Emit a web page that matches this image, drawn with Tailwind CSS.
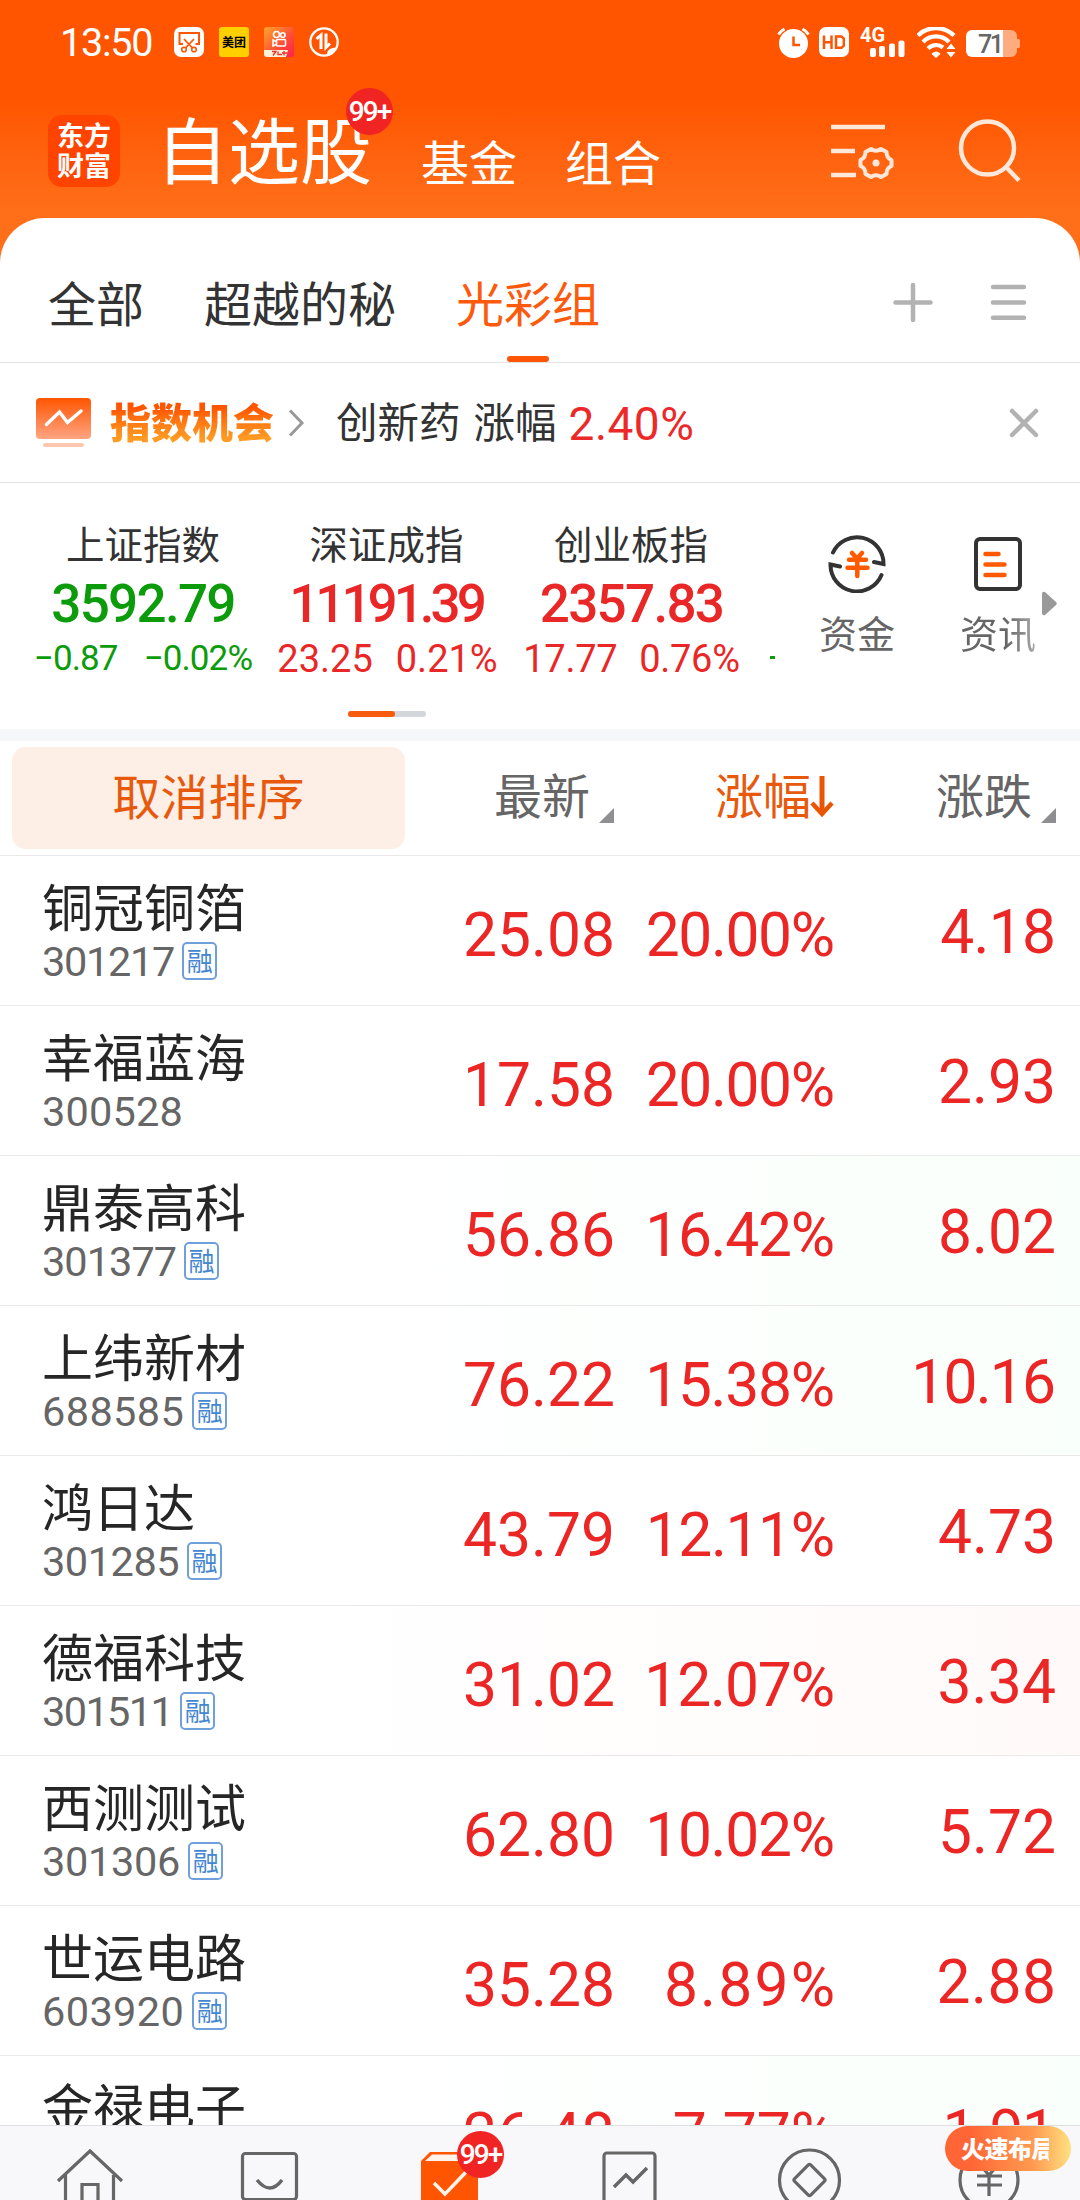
<!DOCTYPE html>
<html lang="zh-CN">
<head>
  <meta charset="UTF-8">
  <script src="https://cdn.jsdelivr.net/npm/@tailwindcss/browser@4"></script>
  <title>自选股</title>
  <meta name="viewport" content="width=device-width, initial-scale=1">
</head>
<body class="w-[1080px] h-[2200px] overflow-hidden bg-[#ff6e18] font-['Noto_Sans_CJK_SC',sans-serif] text-[#333]">
<div class="w-full h-full flex flex-col">

  <!-- Header -->
  <header class="h-[263px] -mb-[45px] shrink-0 bg-linear-to-b from-[#ff5500] from-38% to-[#ff6e18] to-80% text-white">
    <!-- Status bar -->
    <div class="h-[84px] flex items-center pl-[60px] pr-[60px]">
      <span class="w-[114px] pt-[2px] font-[Roboto] text-[39.500px] leading-none tracking-[-1.200px]">13:50</span>
      <div class="flex gap-[15px]">
        <svg class="w-[30px] h-[30px]" viewBox="0 0 30 30" fill="none">
          <rect width="30" height="30" rx="7" fill="#fff"/>
          <path d="M9 17H5.500V6h19.500v11H21.500" stroke="#ff5500" stroke-width="2"/>
          <path d="M10 12l8.500 9M20 12l-8.500 9" stroke="#ff5500" stroke-width="1.800"/>
          <circle cx="10" cy="22.500" r="2.300" stroke="#ff5500" stroke-width="1.600"/><circle cx="20" cy="22.500" r="2.300" stroke="#ff5500" stroke-width="1.600"/>
        </svg>
        <span class="w-[30px] h-[30px] rounded-[3px] bg-[#ffd000] text-black text-[12px] font-bold leading-[30px] text-center whitespace-nowrap">美团</span>
        <svg class="w-[30px] h-[30px]" viewBox="0 0 30 30" fill="none" stroke="#fff" stroke-width="1.600">
          <defs><linearGradient id="ks" x1="0" y1="0" x2="1" y2="1"><stop offset="0" stop-color="#ffa62a"/><stop offset=".6" stop-color="#ff4a35"/><stop offset="1" stop-color="#ff1f4f"/></linearGradient></defs>
          <rect width="30" height="30" rx="3" fill="url(#ks)" stroke="none"/>
          <circle cx="12.500" cy="7.500" r="3"/><circle cx="18.800" cy="8" r="2.300"/>
          <rect x="12.500" y="12.500" width="9" height="6.500" rx="1"/><path d="M12 14.500l-3-1.500v6l3-1.500"/>
          <path d="M0 23h24l-2 7H3a3 3 0 0 1-3-3z" fill="#fff0d8" stroke="none"/>
          <path d="M8 24.500h4l-3 4M14 24.500v3h4M20 24v4.500M18 26h5" stroke="#e8342c" stroke-width="1.300"/>
        </svg>
        <svg class="w-[30px] h-[30px]" viewBox="0 0 30 30" fill="none" stroke="#fff">
          <circle cx="15" cy="15" r="13.700" stroke-width="2.300"/>
          <path d="M7.500 12l4.500-4v14M17 6.500v14l4-4" stroke-width="3"/>
          <path d="M18 27.500c0-5 4-6.500 9.500-7-1.500 3.500-4.500 6.500-9.500 7z" fill="#fff" stroke="none"/>
        </svg>
      </div>
      <div class="ml-auto flex items-center">
        <svg class="w-[33px] h-[31px]" viewBox="0 0 33 31" fill="none" stroke="#fff" stroke-width="3">
          <circle cx="16.500" cy="16.500" r="14.500" fill="#fff" stroke="none"/>
          <path d="M1.500 7.500a14 14 0 0 1 6-5.500M31.500 7.500a14 14 0 0 0-6-5.500"/>
          <path d="M16.500 9.500v8.500h6.500" stroke="#ff5500" stroke-width="2.500"/>
        </svg>
        <svg class="w-[30px] h-[30px] ml-[9px]" viewBox="0 0 30 30" fill="none">
          <rect width="30" height="30" rx="7" fill="#fff"/>
          <path d="M5 8.500v13.500M12.500 8.500v13.500M5 15.200h7.500M17 9.600h5.500l2.300 2v7l-2.300 2.200H17z" stroke="#ff5500" stroke-width="2.500"/>
        </svg>
        <svg class="w-[46px] h-[32px] ml-[11px]" viewBox="0 0 46 32" fill="#fff">
          <text x="0" y="15.500" font-family="Roboto" font-weight="700" font-size="20" textLength="25" lengthAdjust="spacingAndGlyphs">4G</text>
          <rect x="10" y="22" width="6" height="9" rx="2"/><rect x="19" y="20" width="6" height="11" rx="2"/><rect x="29" y="17.500" width="6" height="13.500" rx="2"/><rect x="38.500" y="14.500" width="6" height="16.500" rx="2"/>
        </svg>
        <svg class="w-[40px] h-[31px] ml-[11px]" viewBox="0 0 40 31" fill="none" stroke="#fff" stroke-width="4.200">
          <path d="M1 8.500a25.500 25.500 0 0 1 36 0M6 15a18 18 0 0 1 26 0M11 21.500a11 11 0 0 1 15-1"/>
          <path d="M14.500 27c2.500-3.500 7-3.500 9 0l-4.500 4zM29.500 22l4.500-5.500 4.500 5.500zM29.500 25l4.500 5.500 4.500-5.500z" fill="#fff" stroke="none"/>
        </svg>
        <svg class="w-[54px] h-[27px] ml-[9px] mt-[3px]" viewBox="0 0 54 27">
          <path d="M36 0h9a6 6 0 0 1 6 6v3h1.500a1.500 1.500 0 0 1 1.500 1.500v6a1.500 1.500 0 0 1-1.500 1.500H51v3a6 6 0 0 1-6 6h-9z" fill="#ffab80"/>
          <path d="M6 0h31v27H6a6 6 0 0 1-6-6V6a6 6 0 0 1 6-6z" fill="#fff"/>
          <text x="12" y="22.500" font-family="Roboto" font-weight="500" font-size="25" textLength="26" fill="#666">71</text>
        </svg>
      </div>
    </div>

    <!-- Top navigation -->
    <div class="h-[134px] relative flex pl-[48px] pr-[59px]">
      <div class="w-[72px] h-[72px] mt-[31px] rounded-[14px] bg-[#ff4400] flex flex-col items-center justify-center pb-[2px] text-[27px] leading-[30px] font-bold">
        <span>东方</span><span>财富</span>
      </div>
      <h1 class="ml-[36px] mt-[15px] text-[72px] leading-[96px]">自选股</h1>
      <span class="ml-[49px] mt-[41px] text-[48px] leading-[70px]">基金</span>
      <span class="ml-[48px] mt-[41px] text-[48px] leading-[70px]">组合</span>
      <svg class="w-[64px] h-[60px] ml-auto mt-[39px]" viewBox="0 0 64 60" fill="none" stroke="#ffe8d9" stroke-width="4.500">
        <path d="M1 4h54M1 28h24M1 52h25"/>
        <path d="M41 25.500q5 3.500 10 0l5.500 3q0 6 5 8v6q-5 2-5 8l-5.500 3q-5-3.500-10 0l-5.500-3q0-6-5-8v-6q5-2 5-8z" transform="translate(0 .5)" stroke-linejoin="round" stroke-width="4"/>
        <circle cx="46" cy="40" r="3.500" fill="#ffe8d9" stroke="none"/>
      </svg>
      <svg class="w-[63px] h-[66px] ml-[64px] mt-[34px]" viewBox="0 0 63 66" fill="none" stroke="#ffe8d9" stroke-width="4.500">
        <circle cx="29.500" cy="30" r="26.500"/><path d="M48 49l13 13.500"/>
      </svg>
      <span class="absolute left-[346px] top-[4px] w-[47px] h-[47px] rounded-full bg-[#f12424] text-center leading-[47px] font-[Roboto] font-medium text-[28px] tracking-[-2px]">99+</span>
    </div>
  </header>

  <main class="flex-1 min-h-0 rounded-t-[45px] bg-white flex flex-col overflow-hidden">
    <!-- Group tabs -->
    <nav class="h-[145px] shrink-0 border-b border-[#e3e3e3] flex pl-[48px] pr-[52px] text-[48px] leading-[70px]">
      <span class="mt-[48px]">全部</span>
      <span class="mt-[48px] ml-[60px]">超越的秘</span>
      <div class="ml-[60px] flex flex-col items-center justify-between text-[#fc5a0c]">
        <span class="mt-[48px]">光彩组</span>
        <i class="w-[42px] h-[6px] rounded-[3px] bg-[#fc5505]"></i>
      </div>
      <svg class="w-[40px] h-[40px] ml-auto mt-[64px]" viewBox="0 0 40 40" stroke="#b2b2b2" stroke-width="4.500" stroke-linecap="round"><path d="M20 3v35M2.500 20.500h35"/></svg>
      <svg class="w-[38px] h-[40px] ml-[57px] mt-[64px]" viewBox="0 0 38 40" stroke="#b2b2b2" stroke-width="4.500" stroke-linecap="round"><path d="M3 5h31M3 20.500h31M3 35.800h31"/></svg>
    </nav>

    <!-- Index opportunity strip -->
    <div class="h-[120px] shrink-0 border-b border-[#e3e3e3] flex items-center pl-[36px] pr-[39px]">
      <svg class="w-[55px] h-[50px]" viewBox="0 0 55 50" fill="none">
        <defs><linearGradient id="op" x1="0" y1="0" x2="0" y2="1"><stop offset="0" stop-color="#ff5500"/><stop offset="1" stop-color="#ffa583"/></linearGradient></defs>
        <rect width="55" height="41" rx="4" fill="url(#op)"/>
        <path d="M10.500 26.500L23.500 14l8 10.500L45 13" stroke="#fff" stroke-width="3.500" stroke-linecap="round"/>
        <rect x="7" y="45" width="41" height="4" rx="2" fill="#ffc7b0"/>
      </svg>
      <span class="ml-[19px] text-[41px] leading-[60px] -mt-[5px] font-black bg-linear-to-b from-[#ff5500] from-30% to-[#ff9a22] to-80% bg-clip-text text-transparent">指数机会</span>
      <svg class="w-[18px] h-[28px] ml-[14px]" viewBox="0 0 18 28" fill="none" stroke="#999" stroke-width="3"><path d="M2 1.500l12 12.500L2 26.500"/></svg>
      <span class="ml-[30px] text-[41.500px] leading-[60px] -mt-[5px]">创新药</span>
      <span class="ml-[13px] text-[41.500px] leading-[60px] -mt-[5px]">涨幅</span>
      <span class="ml-[12px] mt-[2px] font-[Roboto] text-[46px] leading-none tracking-[0.500px] text-[#ec2828]">2.40%</span>
      <svg class="w-[34px] h-[34px] ml-auto" viewBox="0 0 34 34" stroke="#b2b2b2" stroke-width="4.500" stroke-linecap="round"><path d="M5 5l24 24M29 5L5 29"/></svg>
    </div>

    <!-- Market indices -->
    <section class="h-[246px] shrink-0 relative flex">
      <div class="w-[776px] h-full flex overflow-hidden">
        <div class="w-[286px] shrink-0 flex flex-col items-center text-[#0b9b0b]">
          <span class="mt-[31px] text-[38.500px] leading-[56px] text-[#333]">上证指数</span>
          <b class="mt-[6px] font-[Roboto] font-medium text-[53px] leading-[56px] tracking-[-1.700px]">3592.79</b>
          <div class="mt-[7px] flex gap-[26px] font-[Roboto] text-[35px] leading-[40px] tracking-[-0.900px]"><span>−0.87</span><span>−0.02%</span></div>
        </div>
        <div class="w-[204px] shrink-0 flex flex-col items-center text-[#e92727]">
          <span class="mt-[31px] text-[38.500px] leading-[56px] text-[#333] -ml-[3px]">深证成指</span>
          <b class="mt-[6px] -ml-[4px] font-[Roboto] font-medium text-[53px] leading-[56px] tracking-[-4px]">11191.39</b>
          <div class="mt-[7px] -ml-[1px] flex gap-[23px] font-[Roboto] text-[38px] leading-[40px] whitespace-nowrap"><span>23.25</span><span>0.21%</span></div>
        </div>
        <div class="w-[280px] shrink-0 flex flex-col items-center text-[#e92727]">
          <span class="mt-[31px] ml-[2px] text-[38.500px] leading-[56px] text-[#333]">创业板指</span>
          <b class="mt-[6px] ml-[3px] font-[Roboto] font-medium text-[53px] leading-[56px] tracking-[-1.700px]">2357.83</b>
          <div class="mt-[7px] ml-[3px] flex gap-[22px] font-[Roboto] text-[38px] leading-[40px] tracking-[-0.300px]"><span>17.77</span><span>0.76%</span></div>
        </div>
        <i class="w-[5px] h-[3px] mt-[173px] bg-[#0b9b0b]"></i>
      </div>
      <div class="ml-[41px] w-[80px] flex flex-col items-center text-[38px] leading-[56px] text-[#666]">
        <svg class="w-[60px] h-[60px] mt-[50px]" viewBox="0 0 60 60" fill="none" stroke="#333" stroke-width="4" stroke-linecap="round">
          <path d="M6 19.500A26.500 26.500 0 0 1 56.500 31l-9.500-2M54.500 42A26.500 26.500 0 0 1 3.500 31.500l9.500 2" />
          <path d="M25 20l5 5.500 5-5.500M22 26.800h17M20.500 34.800h20M30.300 27v16" stroke="#ff5a00" stroke-width="4.500"/>
        </svg>
        <span class="mt-[11px]">资金</span>
      </div>
      <div class="ml-[61px] w-[80px] flex flex-col items-center text-[38px] leading-[56px]">
        <svg class="w-[48px] h-[54px] mt-[54px]" viewBox="0 0 48 54" fill="none" stroke="#333" stroke-width="4">
          <rect x="2" y="2" width="44" height="50" rx="4"/>
          <path d="M11.500 17h13M11.500 27.500h19M11.500 38h19" stroke="#ff5a00" stroke-width="4.500" stroke-linecap="round"/>
        </svg>
        <span class="mt-[13px] bg-linear-to-r from-[#666] from-60% to-[#aaa] bg-clip-text text-transparent">资讯</span>
      </div>
      <svg class="w-[15px] h-[25px] ml-[4px] mt-[108px]" viewBox="0 0 15 25"><path d="M0 3q0-3 3-2l11 10q1.500 1.500 0 3L3 24q-3 1-3-2z" fill="#999"/></svg>
      <div class="absolute left-[348px] top-[228px] w-[78px] h-[6px] rounded-full bg-[#d3d7db]"><i class="block w-[47px] h-[6px] rounded-full bg-[#f95b0e]"></i></div>
    </section>
    <div class="h-[12px] shrink-0 bg-[#f6f7fa]"></div>

    <!-- Column headings -->
    <div class="h-[115px] shrink-0 border-b border-[#e9e9e9] flex pl-[12px] text-[48px] leading-[70px] text-[#666]">
      <button class="w-[393px] h-[102px] mt-[6px] rounded-[14px] bg-[#fdeee6] pb-[8px] text-[#e75a0e]">取消排序</button>
      <div class="w-[209px] flex justify-end"><span class="mt-[17px]">最新</span><svg class="w-[15px] h-[15px] ml-[9px] mt-[67px]" viewBox="0 0 15 15"><path d="M15 0v15H0z" fill="#8e8e93"/></svg></div>
      <div class="w-[220px] flex justify-end text-[#e75a0e]"><span class="mt-[17px]">涨幅</span><svg class="w-[24px] h-[44px] -ml-[1px] mt-[34px]" viewBox="0 0 24 44" fill="none" stroke="#ea5504"><path d="M12 1v36" stroke-width="5"/><path d="M2 28l10 11 10-11" stroke-width="4.500"/></svg></div>
      <div class="w-[222px] flex justify-end"><span class="mt-[17px]">涨跌</span><svg class="w-[15px] h-[15px] ml-[9px] mt-[67px]" viewBox="0 0 15 15"><path d="M15 0v15H0z" fill="#8e8e93"/></svg></div>
    </div>

    <!-- Stock rows -->
    <div id="stocks" class="flex-1 min-h-0 overflow-hidden"></div>
  </main>

  <!-- Tab bar -->
  <footer class="h-[75px] shrink-0 relative border-t border-[#dedfe0] bg-[#f8f8fa] grid grid-cols-6">
    <svg class="w-[180px] h-[74px]" viewBox="0 0 180 74" fill="none" stroke="#666" stroke-width="3.200"><path d="M58 55l32-30 32 30M65.500 49v30M113.500 49v30M82 79V58.500h16V79"/></svg>
    <svg class="w-[180px] h-[74px]" viewBox="0 0 180 74" fill="none" stroke="#666" stroke-width="3.200"><rect x="62.500" y="27.500" width="54" height="46" rx="3"/><path d="M77 54q13 16 25 0" stroke-width="3.500"/></svg>
    <svg class="w-[180px] h-[74px]" viewBox="0 0 180 74" fill="none"><path d="M61 35l9-9h40l8 9v45H61z" fill="#ff5500"/><path d="M65 35l7-6.500h40V35z" fill="#fff3ec"/><path d="M74 57l11 11 22-23" stroke="#fff3ec" stroke-width="3.500"/></svg>
    <svg class="w-[180px] h-[74px]" viewBox="0 0 180 74" fill="none" stroke="#666" stroke-width="3.200"><rect x="64" y="27" width="51" height="60" rx="3"/><path d="M74 61l12-12 7 7 14-14" stroke-width="3.500"/></svg>
    <svg class="w-[180px] h-[74px]" viewBox="0 0 180 74" fill="none" stroke="#666" stroke-width="3.200"><circle cx="89.500" cy="54" r="30"/><rect x="78" y="42.500" width="23" height="23" rx="2" transform="rotate(45 89.500 54)"/></svg>
    <svg class="w-[180px] h-[74px]" viewBox="0 0 180 74" fill="none" stroke="#666" stroke-width="3.200"><circle cx="89" cy="54" r="29"/><path d="M81 40l8 9 8-9M77 50h25M77 59h25M89 49v21"/></svg>
    <span class="absolute left-[457px] top-[5px] w-[47px] h-[47px] rounded-full bg-[#f12424] text-white text-center leading-[47px] font-[Roboto] font-medium text-[28px] tracking-[-2px]">99+</span>
    <span class="absolute left-[945px] top-0 w-[126px] h-[45px] rounded-full bg-linear-to-r from-[#ff6535] from-20% via-[#ff9a50] via-70% to-[#ffe080] pl-[16px] text-white text-[24px] leading-[44px] font-black tracking-[-0.500px] whitespace-nowrap"><span class="block w-[88px] overflow-hidden">火速布局</span></span>
  </footer>
</div>

  <script>
    // x: where the row's code text ends, pt / ct: tracking of percentage and change
    const stocks = [
      { name: '铜冠铜箔', code: '301217', x: 174, tag: true, price: '25.08', pct: '20.00%', pt: -1.4, ct: -0.7, chg: '4.18' },
      { name: '幸福蓝海', code: '300528', x: 183, tag: false, price: '17.58', pct: '20.00%', pt: -1.4, ct: 0, chg: '2.93' },
      { name: '鼎泰高科', code: '301377', x: 176, tag: true, price: '56.86', pct: '16.42%', pt: -1.3, ct: 0, chg: '8.02', bg: 'bg-linear-to-r from-white from-30% to-[#f9fffb]' },
      { name: '上纬新材', code: '688585', x: 184, tag: true, price: '76.22', pct: '15.38%', pt: -1.3, ct: -1.8, chg: '10.16', bg: 'bg-linear-to-r from-white from-30% to-[#f9fffb]' },
      { name: '鸿日达', code: '301285', x: 179, tag: true, price: '43.79', pct: '12.11%', pt: -1.4, ct: 0, chg: '4.73' },
      { name: '德福科技', code: '301511', x: 172, tag: true, price: '31.02', pct: '12.07%', pt: -1.1, ct: 0.2, chg: '3.34', bg: 'bg-linear-to-r from-white from-30% to-[#fffaf9]' },
      { name: '西测测试', code: '301306', x: 180, tag: true, price: '62.80', pct: '10.02%', pt: -1.3, ct: 0, chg: '5.72' },
      { name: '世运电路', code: '603920', x: 184, tag: true, price: '35.28', pct: '8.89%', pt: 2.2, ct: 0.5, chg: '2.88' },
      { name: '金禄电子', code: '301282', x: 179, tag: true, price: '26.48', pct: '7.77%', pt: 0, ct: -1.5, chg: '1.91', bg: 'bg-linear-to-r from-white from-30% to-[#f9fffb]' },
    ];

    document.getElementById('stocks').innerHTML = stocks.map(s => `
      <div class="h-[150px] border-b border-[#e9e9e9] flex ${s.bg || ''}">
        <div class="w-[374px] pl-[42px]">
          <div class="mt-[14px] h-[71px] text-[51px] leading-[70px] text-[#262626]">${s.name}</div>
          <div class="flex items-center h-[42px]">
            <span class="font-[Roboto] text-[41.500px] leading-[42px] text-[#666]" style="letter-spacing:${((s.x - 42 - 139.8) / 6).toFixed(2)}px">${s.code}</span>
            ${s.tag ? '<i class="not-italic ml-[8px] w-[35px] h-[38px] -mt-[2px] border-2 border-[#6fa0dc] rounded-[5px] text-[26px] leading-[30px] text-center text-[#4486d0] flex items-center justify-center pb-[2px]">融</i>' : ''}
          </div>
        </div>
        <div class="w-[241px] pt-[50px] text-right font-[Roboto] text-[60.500px] leading-[60px] text-[#ec2525]">${s.price}</div>
        <div class="w-[220px] pt-[50px] flex justify-end font-[Roboto] text-[60.500px] leading-[60px] text-[#ec2525]"><span style="letter-spacing:${s.pt}px;margin-right:${-s.pt}px">${s.pct}</span></div>
        <div class="w-[221px] pt-[47px] flex justify-end font-[Roboto] text-[60.500px] leading-[60px] text-[#ec2525]"><span style="letter-spacing:${s.ct}px;margin-right:${-s.ct}px">${s.chg}</span></div>
      </div>`).join('');
  </script>
</body>
</html>
